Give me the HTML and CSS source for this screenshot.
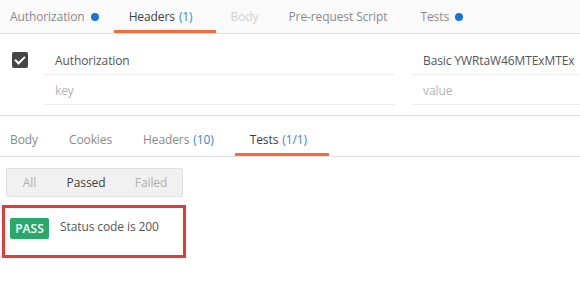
FILE: index.html
```html
<!DOCTYPE html>
<html lang="en">
<head>
  <meta charset="UTF-8">
  <title>Request</title>
  <link rel="stylesheet" href="styles.css">
</head>
<body>
  <div class="request">
    <ul class="tabs request-tabs">
      <li>Authorization <span class="dot"></span></li>
      <li class="active">Headers <span class="count">(1)</span></li>
      <li class="disabled">Body</li>
      <li>Pre-request Script</li>
      <li>Tests <span class="dot"></span></li>
    </ul>
    <div class="header-table">
      <div class="row">
        <div class="check"><span class="checkbox"></span></div>
        <div class="cell key">Authorization</div>
        <div class="cell value">Basic YWRtaW46MTExMTEx</div>
      </div>
      <div class="row">
        <div class="check"></div>
        <div class="cell key placeholder">key</div>
        <div class="cell value placeholder">value</div>
      </div>
    </div>
  </div>
  <div class="response">
    <ul class="tabs response-tabs">
      <li>Body</li>
      <li>Cookies</li>
      <li>Headers <span class="count">(10)</span></li>
      <li class="active">Tests <span class="count">(1/1)</span></li>
    </ul>
    <div class="filters">
      <span>All</span>
      <span class="selected">Passed</span>
      <span>Failed</span>
    </div>
    <div class="results">
      <div class="result">
        <span class="badge">PASS</span>
        <span class="name">Status code is 200</span>
      </div>
    </div>
  </div>
</body>
</html>
```

FILE: styles.css
```css
* {
  box-sizing: border-box;
}
html, body, ul, li, div {
  margin: 0;
  padding: 0;
}
ul {
  list-style: none;
}
body {
  width: 580px;
  height: 296px;
  overflow: hidden;
  background-color: #fff;
  font-family: "Open Sans", "Liberation Sans", sans-serif;
  font-size: 12px;
  letter-spacing: -0.1px;
  color: #555;
}
.tabs {
  display: flex;
  border-bottom: 1px solid #e2e2e2;
}
.tabs li {
  display: flex;
  align-items: center;
  color: #8a8a8a;
  border-bottom: 3px solid transparent;
}
.tabs li.active {
  color: #404040;
  border-bottom-color: #f26b3a;
}
.tabs li.disabled {
  color: #d0d0d0;
}
.count {
  color: #3a85d4;
  margin-left: 4px;
}
.dot {
  display: inline-block;
  width: 8px;
  height: 8px;
  margin-left: 6px;
  border-radius: 50%;
  background-color: #1676d8;
}
.request-tabs {
  height: 34px;
  padding-top: 3px;
  padding-left: 10px;
  background-color: #fafafa;
}
.request-tabs li {
  padding: 0 15px;
}
.request-tabs li:first-child {
  padding-left: 0;
}
.request-tabs li.active {
  padding: 0 23px 0 15px;
}
.request-tabs li:nth-child(5) {
  padding-left: 18px;
}
.header-table {
  padding-top: 11px;
  padding-bottom: 10px;
  border-bottom: 1px solid #e2e2e2;
}
.row {
  display: flex;
  height: 30px;
}
.check {
  width: 44px;
  display: flex;
  align-items: center;
  justify-content: center;
}
.checkbox {
  position: relative;
  width: 16px;
  height: 16px;
  margin-left: -4px;
  border-radius: 2px;
  background-color: #464646;
}
.checkbox::after {
  content: "";
  position: absolute;
  left: 5px;
  top: 2px;
  width: 4px;
  height: 8px;
  border: solid #fff;
  border-width: 0 2px 2px 0;
  transform: rotate(45deg);
}
.cell {
  display: flex;
  align-items: center;
  padding-left: 11px;
  padding-top: 1px;
  border-bottom: 1px solid #ececec;
  color: #555;
}
.key {
  width: 351px;
}
.value {
  margin-left: 17px;
  flex: 1;
  white-space: nowrap;
  overflow: hidden;
}
.placeholder {
  color: #b5b5b5;
}
.response-tabs {
  height: 41px;
  padding-left: 10px;
  padding-top: 9px;
}
.response-tabs li {
  padding: 0 15px;
}
.response-tabs li:first-child {
  padding-left: 0;
  padding-right: 16px;
}
.response-tabs li:nth-child(3) {
  padding-left: 16px;
}
.response-tabs li.active {
  padding: 0 22px 0 15px;
  margin-left: 6px;
}
.filters {
  display: flex;
  width: 177px;
  height: 29px;
  margin: 11px 0 0 6px;
  border: 1px solid #e0e0e0;
  border-radius: 2px;
  background-color: #f1f1f1;
  color: #b0b0b0;
}
.filters span {
  display: flex;
  align-items: center;
  justify-content: center;
}
.filters span:nth-child(1) {
  width: 45px;
}
.filters span:nth-child(2) {
  width: 68px;
}
.filters span:nth-child(3) {
  flex: 1;
}
.filters .selected {
  color: #404040;
}
.results {
  width: 184px;
  height: 53px;
  margin: 8px 0 0 2px;
  border: 3px solid #e23b3b;
}
.result {
  display: flex;
  align-items: center;
  padding: 10px 0 0 5px;
}
.badge {
  width: 39px;
  height: 21px;
  line-height: 21px;
  text-align: center;
  border-radius: 2px;
  background-color: #28a96b;
  color: #fff;
  font-weight: 600;
  letter-spacing: 0;
}
.name {
  margin-left: 11px;
  margin-top: -4px;
  color: #555;
}
```
